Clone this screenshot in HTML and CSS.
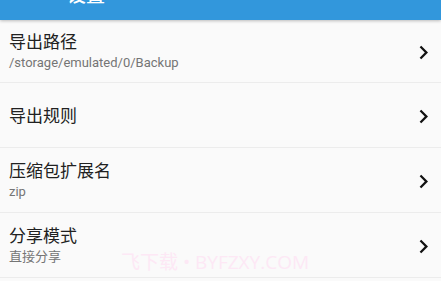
FILE: index.html
```html
<!DOCTYPE html>
<html lang="zh">
<head>
<meta charset="utf-8">
<link rel="stylesheet" href="styles.css">
</head>
<body>
<div class="app">
  <header class="toolbar"><span class="toolbar-title">设置</span></header>
  <main class="list">
    <div class="row">
      <div class="text">
        <div class="title">导出路径</div>
        <div class="summary">/storage/emulated/0/Backup</div>
      </div>
      <svg class="chev" viewBox="0 0 24 24"><path d="M10 6L8.59 7.41 13.17 12l-4.58 4.59L10 18l6-6z"/></svg>
    </div>
    <div class="row">
      <div class="text">
        <div class="title">导出规则</div>
      </div>
      <svg class="chev" viewBox="0 0 24 24"><path d="M10 6L8.59 7.41 13.17 12l-4.58 4.59L10 18l6-6z"/></svg>
    </div>
    <div class="row">
      <div class="text">
        <div class="title">压缩包扩展名</div>
        <div class="summary">zip</div>
      </div>
      <svg class="chev" viewBox="0 0 24 24"><path d="M10 6L8.59 7.41 13.17 12l-4.58 4.59L10 18l6-6z"/></svg>
    </div>
    <div class="row">
      <div class="text">
        <div class="title">分享模式</div>
        <div class="summary">直接分享</div>
      </div>
      <svg class="chev" viewBox="0 0 24 24"><path d="M10 6L8.59 7.41 13.17 12l-4.58 4.59L10 18l6-6z"/></svg>
    </div>
  </main>
  <div class="watermark">飞下载 • BYFZXY.COM</div>
</div>
</body>
</html>
```
FILE: styles.css
```css
html, body {
  margin: 0;
  padding: 0;
  background: #fafafa;
}
.app {
  position: relative;
  width: 441px;
  height: 281px;
  overflow: hidden;
  font-family: Roboto, "Noto Sans CJK SC", sans-serif;
  background: #fafafa;
}
.toolbar {
  height: 20px;
  background: #3297dc;
  box-shadow: 0 1px 3px rgba(0,0,0,0.25);
  overflow: hidden;
  display: flex;
  align-items: flex-start;
  position: relative;
  z-index: 1;
}
.toolbar-title {
  color: #fff;
  font-size: 19px;
  line-height: 20px;
  margin-top: -14px;
  margin-left: 67px;
  font-weight: 500;
}
.list {
  display: flex;
  flex-direction: column;
}
.row {
  height: 64px;
  border-bottom: 1px solid #ececec;
  display: flex;
  align-items: center;
  padding-left: 9px;
  padding-right: 4px;
  padding-top: 2px;
  box-sizing: border-box;
  height: 65px;
}
.row:first-child {
  height: 63px;
}
.text {
  flex: 1;
  display: flex;
  flex-direction: column;
}
.title {
  font-size: 17px;
  line-height: 21px;
  color: #212121;
}
.summary {
  font-size: 13px;
  line-height: 19px;
  color: #757575;
}
.chev {
  width: 27px;
  height: 27px;
  fill: #111;
}
.watermark {
  position: absolute;
  left: 121px;
  top: 247px;
  font-size: 19px;
  color: #fde8f5;
  font-family: "Open Sans", "Noto Sans CJK SC", sans-serif;
  white-space: nowrap;
}
```
